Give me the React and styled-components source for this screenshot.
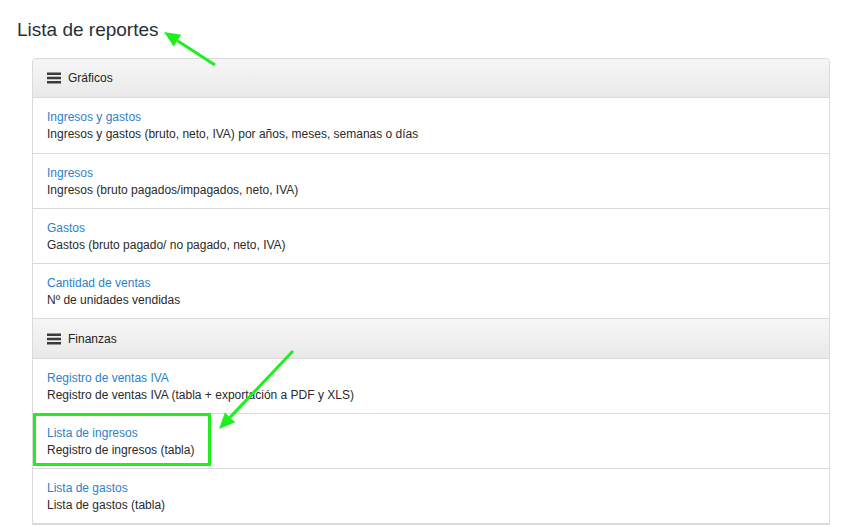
import React from 'react';
import styled, { createGlobalStyle } from 'styled-components';

const GlobalStyle = createGlobalStyle`
	html, body {
		margin: 0;
		padding: 0;
		background: #fff;
		font-family: 'Liberation Sans', Arial, sans-serif;
	}
`;

const sections = [
	{
		title: 'Gráficos',
		items: [
			{ name: 'Ingresos y gastos', desc: 'Ingresos y gastos (bruto, neto, IVA) por años, meses, semanas o días' },
			{ name: 'Ingresos', desc: 'Ingresos (bruto pagados/impagados, neto, IVA)' },
			{ name: 'Gastos', desc: 'Gastos (bruto pagado/ no pagado, neto, IVA)' },
			{ name: 'Cantidad de ventas', desc: 'Nº de unidades vendidas' },
		],
	},
	{
		title: 'Finanzas',
		items: [
			{ name: 'Registro de ventas IVA', desc: 'Registro de ventas IVA (tabla + exportación a PDF y XLS)' },
			{ name: 'Lista de ingresos', desc: 'Registro de ingresos (tabla)', marked: true },
			{ name: 'Lista de gastos', desc: 'Lista de gastos (tabla)' },
		],
	},
];

const Arrow = ({ x1, y1, x2, y2 }) => {
	const a = Math.atan2(y2 - y1, x2 - x1);
	const len = 16;
	const w = 7;
	const bx = x2 - Math.cos(a) * len;
	const by = y2 - Math.sin(a) * len;
	const px = -Math.sin(a) * w;
	const py = Math.cos(a) * w;
	return (
		<g>
			<line x1={x1} y1={y1} x2={bx} y2={by} stroke='#1fef1f' strokeWidth='3' />
			<polygon points={`${x2},${y2} ${bx + px},${by + py} ${bx - px},${by - py}`} fill='#1fef1f' />
		</g>
	);
};

const MenuIcon = () => (
	<svg width='14' height='12' viewBox='0 0 14 12'>
		<rect x='0' y='0.5' width='14' height='2.5' fill='#3a3a3a' />
		<rect x='0' y='4.75' width='14' height='2.5' fill='#3a3a3a' />
		<rect x='0' y='9' width='14' height='2.5' fill='#3a3a3a' />
	</svg>
);

const App = () => {
	return (
		<Page>
			<GlobalStyle />
			<Title>Lista de reportes</Title>
			<Panel>
				{sections.map((section) => (
					<React.Fragment key={section.title}>
						<Header>
							<MenuIcon />
							<span>{section.title}</span>
						</Header>
						{section.items.map((item) => (
							<Row key={item.name}>
								<Link href='#'>{item.name}</Link>
								<Desc>{item.desc}</Desc>
								{item.marked && <Highlight />}
							</Row>
						))}
					</React.Fragment>
				))}
			</Panel>
			<Overlay width='855' height='526'>
				<Arrow x1={215} y1={65} x2={164} y2={32} />
				<Arrow x1={293} y1={351} x2={219} y2={429} />
			</Overlay>
		</Page>
	);
};

export default App;

const Page = styled.div`
	position: relative;
	width: 855px;
	height: 526px;
	overflow: hidden;
	padding: 18px 25px 0 17px;
	box-sizing: border-box;
`;

const Title = styled.h1`
	margin: 0 0 16px;
	font-size: 19px;
	font-weight: normal;
	color: #2a2f36;
	line-height: 24px;
`;

const Panel = styled.div`
	margin-left: 15px;
	border: 1px solid #dadada;
	border-radius: 4px 4px 0 0;
	background: #fff;
`;

const Header = styled.div`
	display: flex;
	align-items: center;
	gap: 7px;
	height: 39px;
	padding: 0 14px;
	background: linear-gradient(#f6f6f6, #e9e9e9);
	border-bottom: 1px solid #dadada;
	font-size: 12px;
	color: #222;
	&:first-child {
		height: 38px;
		border-radius: 4px 4px 0 0;
	}
`;

const Row = styled.div`
	position: relative;
	display: flex;
	flex-direction: column;
	justify-content: center;
	gap: 3px;
	height: 54px;
	padding: 0 14px;
	border-bottom: 1px solid #dadada;
	font-size: 12px;
	&:nth-child(2) {
		height: 55px;
	}
`;

const Link = styled.a`
	color: #2d7fcb;
	text-decoration: none;
	line-height: 14px;
`;

const Desc = styled.div`
	color: #2a2a2a;
	line-height: 14px;
`;

const Highlight = styled.div`
	position: absolute;
	left: 0;
	top: -1px;
	width: 178px;
	height: 53px;
	border: 3px solid #1fef1f;
	box-sizing: border-box;
`;

const Overlay = styled.svg`
	position: absolute;
	left: 0;
	top: 0;
	pointer-events: none;
`;
